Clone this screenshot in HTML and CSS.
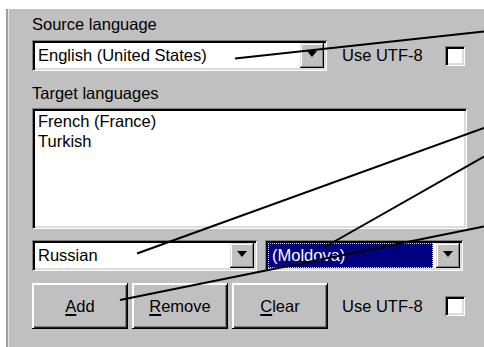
FILE: index.html
```html
<!DOCTYPE html>
<html>
<head>
<meta charset="utf-8">
<link rel="stylesheet" href="styles.css">
</head>
<body>
<div class="panel">
  <div class="label">Source language</div>
  <div class="row row-source">
    <div class="combo combo-source">
      <span class="combo-text">English (United States)</span>
      <span class="drop"><span class="arrow"></span></span>
    </div>
    <span class="utf">Use UTF-8</span>
    <span class="check"></span>
  </div>
  <div class="label label-target">Target languages</div>
  <div class="listbox">
    <div class="item">French (France)</div>
    <div class="item">Turkish</div>
  </div>
  <div class="row row-combos">
    <div class="combo combo-lang">
      <span class="combo-text">Russian</span>
      <span class="drop"><span class="arrow"></span></span>
    </div>
    <div class="combo combo-region">
      <span class="combo-text selected"><span class="sel-inner">(Moldova)</span></span>
      <span class="drop"><span class="arrow"></span></span>
    </div>
  </div>
  <div class="row row-buttons">
    <button class="btn"><u>A</u>dd</button>
    <button class="btn"><u>R</u>emove</button>
    <button class="btn"><u>C</u>lear</button>
    <span class="utf utf-bottom">Use UTF-8</span>
    <span class="check"></span>
  </div>
</div>
<svg class="callouts" width="484" height="347" viewBox="0 0 484 347">
  <line x1="235" y1="58.5" x2="484" y2="31.5"/>
  <line x1="137" y1="253.5" x2="484" y2="128"/>
  <line x1="323" y1="248" x2="484" y2="156.5"/>
  <line x1="120" y1="300" x2="484" y2="226.5"/>
</svg>
</body>
</html>
```

FILE: styles.css
```css
html, body {
  margin: 0;
  padding: 0;
  background: #ffffff;
}

body {
  width: 484px;
  height: 347px;
  overflow: hidden;
  position: relative;
  font-family: "Liberation Sans", Arial, sans-serif;
  font-size: 16.5px;
  color: #000;
}

.panel {
  margin: 9px 0 0 6px;
  height: 338px;
  box-sizing: border-box;
  border-left: 2px solid #a0a0a0;
  box-shadow: inset 1px 0 #e6e6e6;
  background: #c0c0c0;
  padding: 6px 0 0 24px;
}

.label {
  line-height: 19px;
  height: 19px;
  white-space: nowrap;
}

.label-target {
  margin-top: 13px;
}

.row {
  display: flex;
  align-items: center;
}

.row-source {
  margin-top: 6px;
  height: 31px;
}

.combo {
  height: 31px;
  box-sizing: border-box;
  padding: 3px;
  background: #fff;
  display: flex;
  box-shadow:
    inset 1px 1px #808080,
    inset -1px -1px #ffffff,
    inset 3px 3px #000000,
    inset -3px -3px #dcdcdc;
}

.combo-source { width: 295px; }
.combo-lang { width: 225px; }
.combo-region { width: 198px; margin-left: 8px; }

.combo-text {
  flex: 1;
  line-height: 25px;
  padding-left: 3px;
  white-space: nowrap;
  overflow: hidden;
}

.combo-text.selected {
  padding-left: 0;
  margin-right: 3px;
  background: #000080;
  color: #fff;
  display: flex;
}

.sel-inner {
  flex: 1;
  line-height: 23px;
  padding-left: 3px;
  border: 1px dotted #f0f070;
}

.drop {
  width: 24px;
  height: 25px;
  background: #c0c0c0;
  display: flex;
  align-items: center;
  justify-content: center;
  box-sizing: border-box;
  padding-bottom: 3px;
  box-shadow:
    inset -1px -1px #000000,
    inset 1px 1px #dfdfdf,
    inset -2px -2px #808080,
    inset 2px 2px #ffffff;
}

.arrow {
  width: 0;
  height: 0;
  border-left: 5.5px solid transparent;
  border-right: 5.5px solid transparent;
  border-top: 6px solid #000;
}

.utf {
  margin-left: 15px;
  width: 103px;
  line-height: 19px;
  white-space: nowrap;
}

.utf-bottom {
  margin-left: 14px;
}

.check {
  width: 20px;
  height: 20px;
  box-sizing: border-box;
  background: #fff;
  box-shadow:
    inset 1px 1px #808080,
    inset -1px -1px #ffffff,
    inset 3px 3px #000000,
    inset -3px -3px #dcdcdc;
}

.listbox {
  margin-top: 5px;
  width: 435px;
  height: 121px;
  box-sizing: border-box;
  padding: 3px 3px 3px 6px;
  background: #fff;
  box-shadow:
    inset 1px 1px #808080,
    inset -1px -1px #ffffff,
    inset 3px 3px #000000,
    inset -3px -3px #dcdcdc;
}

.item {
  line-height: 20px;
  white-space: nowrap;
}

.row-combos {
  margin-top: 11px;
  height: 31px;
}

.row-buttons {
  margin-top: 12px;
  height: 46px;
}

.btn {
  width: 96px;
  height: 46px;
  margin: 0 4px 0 0;
  padding: 0;
  border: 0;
  background: #c0c0c0;
  font-family: inherit;
  font-size: 16.5px;
  color: #000;
  line-height: 19px;
  box-shadow:
    inset -1px -1px #000000,
    inset 2px 2px #ffffff,
    inset -2px -2px #202020,
    inset -3px -3px #808080;
}

.btn:nth-of-type(3) {
  margin-right: 0;
}

.btn u {
  text-decoration-thickness: 1.5px;
  text-underline-offset: 2px;
}

.callouts {
  position: absolute;
  left: 0;
  top: 0;
  pointer-events: none;
}

.callouts line {
  stroke: #000;
  stroke-width: 2;
}
```
